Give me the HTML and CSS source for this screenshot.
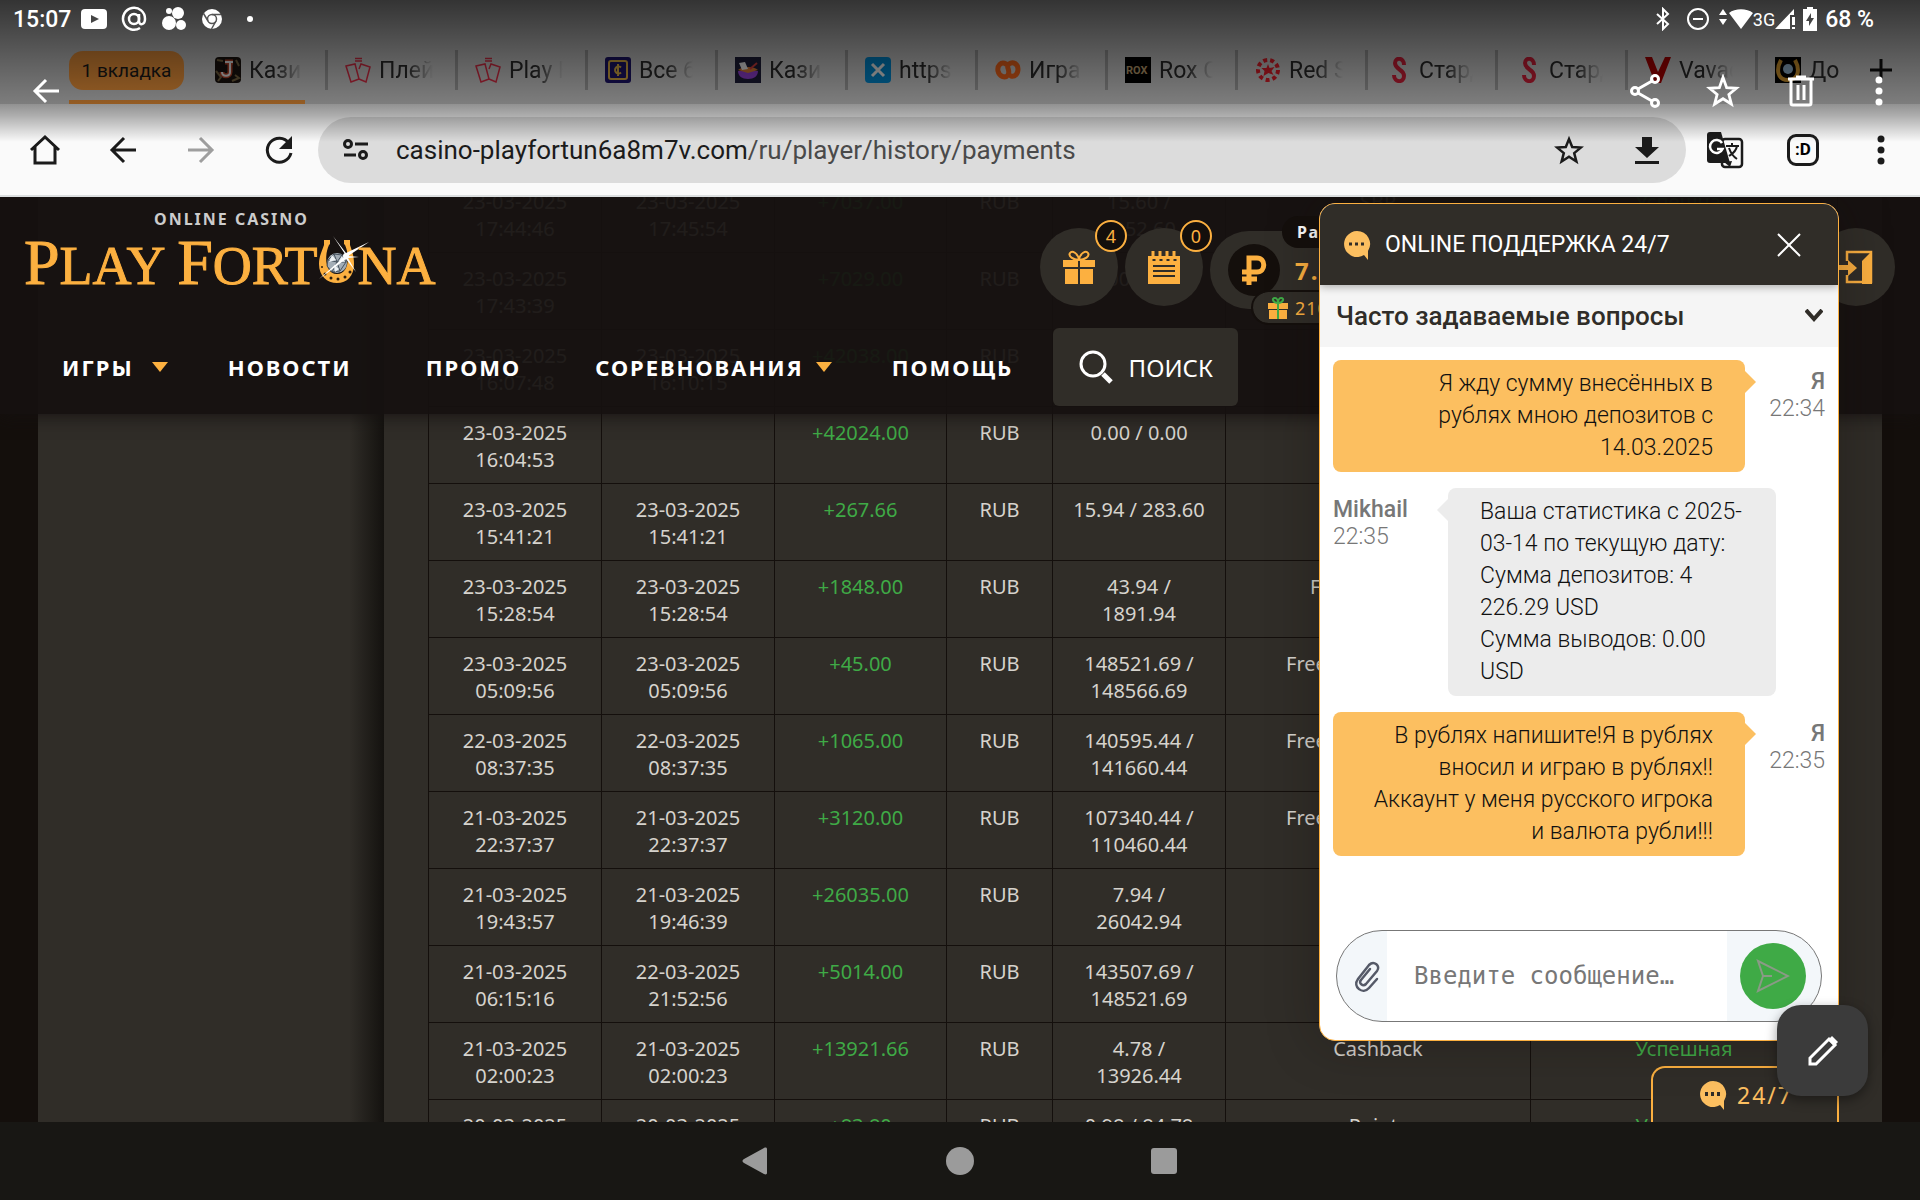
FILE: index.html
```html
<!DOCTYPE html>
<html lang="ru">
<head>
  <meta charset="UTF-8" />
  <meta name="viewport" content="width=device-width, initial-scale=1" />
  <title>Play Fortuna - История платежей</title>
  <link rel="stylesheet" href="styles.css">
</head>
<body>
  <div class="browser">
    <div class="tab-strip">
      <div class="tab-group">
        <button class="group-pill">1 вкладка</button>
        <div class="tab-inner">
          <svg class="fav" viewBox="0 0 26 26"><rect width="26" height="26" rx="4" fill="#1c1410"/><path d="M2 3l6 1M1 14l5 6-3 4M21 3l3 6M20 18l4 3-7 3" stroke="#7d6a45" stroke-width="2" fill="none"/><path d="M10 5h8M15 5v10c0 5-8 5-8 0" fill="none" stroke="#c2482c" stroke-width="5"/><path d="M10 5h8M15 5v10c0 5-8 5-8 0" fill="none" stroke="#fff" stroke-width="2"/></svg>
          <span class="tab-title">Казино</span>
        </div>
      </div>
      <div class="tab">
        <svg class="fav" viewBox="0 0 26 26" fill="none" stroke="#e8304a" stroke-width="1.500"><path d="M10 1.500h7M10 4h7M1 9l9-2 4 15-8 3zM14 12l2-5 9 3-4 15-7-3"/></svg>
        <span class="tab-title">Плей</span>
      </div>
      <div class="tab">
        <svg class="fav" viewBox="0 0 26 26" fill="none" stroke="#e8304a" stroke-width="1.500"><path d="M10 1.500h7M10 4h7M1 9l9-2 4 15-8 3zM14 12l2-5 9 3-4 15-7-3"/></svg>
        <span class="tab-title">Play F</span>
      </div>
      <div class="tab">
        <svg class="fav" viewBox="0 0 26 26"><rect width="26" height="26" rx="3" fill="#1d1470"/><rect x="4" y="4" width="18" height="18" rx="2" fill="none" stroke="#e9b949" stroke-width="2"/><path d="M16 10.500a3.500 3.500 0 1 0 0 5M13 7v12" stroke="#e9b949" stroke-width="2" fill="none"/></svg>
        <span class="tab-title">Все б</span>
      </div>
      <div class="tab">
        <svg class="fav" viewBox="0 0 26 26"><rect width="26" height="26" fill="#1f1f3c"/><path d="M3 14h20c0 5-4 8-10 8S3 19 3 14z" fill="#9b43e0"/><path d="M3 13c4-4 16-4 20 0l-10 3z" fill="#e98538"/><path d="M4 6l6-1 3 7-6 1z" fill="#fff"/><path d="M15 12l7-6" stroke="#e04040" stroke-width="2"/></svg>
        <span class="tab-title">Казин</span>
      </div>
      <div class="tab">
        <svg class="fav" viewBox="0 0 26 26"><rect width="26" height="26" rx="4" fill="#0091dc"/><path d="M7 7l12 12M19 7L7 19" stroke="#fff" stroke-width="3"/></svg>
        <span class="tab-title">https:</span>
      </div>
      <div class="tab">
        <svg class="fav" viewBox="0 0 26 26" fill="none" stroke="#ff6a1c" stroke-width="5" stroke-linecap="round"><path d="M11 7C6 4 2 9 3 14s7 8 10 4c3-5-3-8 1-11s9 0 9 5-3 8-7 7"/></svg>
        <span class="tab-title">Игра</span>
      </div>
      <div class="tab">
        <svg class="fav" viewBox="0 0 26 26"><rect width="26" height="26" fill="#000"/><text x="1" y="17" class="fav-rox">ROX</text></svg>
        <span class="tab-title">Rox C</span>
      </div>
      <div class="tab">
        <svg class="fav" viewBox="0 0 26 26"><circle cx="13" cy="13" r="10" fill="none" stroke="#f01f2c" stroke-width="4" stroke-dasharray="4 3"/><path d="M13 7l1.500 4 5-1-3 4 2 4-5-2-5 3 1-5-3-3 5 0z" fill="#f01f2c"/></svg>
        <span class="tab-title">Red S</span>
      </div>
      <div class="tab">
        <svg class="fav" viewBox="0 0 26 26" fill="none" stroke="#e0213c" stroke-width="4"><path d="M19 8c0-8-9-8-9-2 0 7 9 6 9 13 0 7-10 7-10-1"/></svg>
        <span class="tab-title">Старда</span>
      </div>
      <div class="tab">
        <svg class="fav" viewBox="0 0 26 26" fill="none" stroke="#e0213c" stroke-width="4"><path d="M19 8c0-8-9-8-9-2 0 7 9 6 9 13 0 7-10 7-10-1"/></svg>
        <span class="tab-title">Старда</span>
      </div>
      <div class="tab">
        <svg class="fav" viewBox="0 0 26 26"><path d="M0 0h7l6 15L20 0h6L16 26h-6z" fill="#b80000"/></svg>
        <span class="tab-title">Vavad</span>
      </div>
      <div class="tab last">
        <svg class="fav" viewBox="0 0 26 26"><rect width="26" height="26" fill="#000"/><path d="M6 3c-5 9-4 20 7 20S25 12 20 3" fill="none" stroke="#e0a030" stroke-width="4"/><circle cx="13" cy="12" r="5" fill="#9dc0dc"/></svg>
        <span class="tab-title">До</span>
      </div>
      <button class="new-tab" aria-label="Новая вкладка"><svg width="24" height="24" viewBox="0 0 24 24"><path d="M12 1v22M1 12h22" stroke="#111" stroke-width="3"/></svg></button>
    </div>

    <div class="toolbar">
      <button class="tool" aria-label="Домой"><svg width="34" height="34" viewBox="0 0 34 34" fill="none" stroke="#1b1b1b" stroke-width="3"><path d="M3 17L17 4l14 13M7 14v16h20V14"/></svg></button>
      <button class="tool" aria-label="Назад"><svg width="34" height="34" viewBox="0 0 34 34" fill="none" stroke="#1b1b1b" stroke-width="3"><path d="M30 17H6M18 5L6 17l12 12"/></svg></button>
      <button class="tool" aria-label="Вперёд"><svg width="34" height="34" viewBox="0 0 34 34" fill="none" stroke="#9e9e9e" stroke-width="3"><path d="M4 17h24M16 5l12 12-12 12"/></svg></button>
      <button class="tool" aria-label="Обновить"><svg width="34" height="34" viewBox="0 0 34 34"><path d="M27 10A12 12 0 1 0 29 20" fill="none" stroke="#1b1b1b" stroke-width="3"/><path d="M30 3v13H17z" fill="#1b1b1b"/></svg></button>
      <div class="address">
        <svg class="site-info" width="28" height="24" viewBox="0 0 28 24" fill="none" stroke="#1b1b1b" stroke-width="3"><circle cx="6" cy="6" r="3.500"/><path d="M13 6h13M2 17h12"/><circle cx="21" cy="17" r="3.500"/></svg>
        <a class="url" href="#"><span>casino-playfortun6a8m7v.com</span>/ru/player/history/payments</a>
        <button class="tool" aria-label="В закладки"><svg width="30" height="30" viewBox="0 0 30 30"><path d="M15 4l3.200 8 8.600.6-6.600 5.500 2.200 8.400L15 21.800l-7.400 4.700 2.200-8.400L3.200 12.600l8.600-.6z" fill="none" stroke="#1b1b1b" stroke-width="2.500"/></svg></button>
        <button class="tool" aria-label="Скачать"><svg width="30" height="34" viewBox="0 0 30 34" fill="#1b1b1b"><path d="M10 4h10v10h7L15 25 3 14h7zM3 28h24v3H3z"/></svg></button>
      </div>
      <button class="tool" aria-label="Перевести"><svg width="38" height="38" viewBox="0 0 38 38"><rect x="16" y="8" width="20" height="28" rx="3" fill="none" stroke="#1b1b1b" stroke-width="2.500"/><path d="M4 1h11l9 31H4a3 3 0 0 1-3-3V4a3 3 0 0 1 3-3z" fill="#1b1b1b"/><path d="M18 31l6 5 2-6z" fill="#1b1b1b"/><path d="M16 12a6.500 6.500 0 1 0 .5 6H11" fill="none" stroke="#fff" stroke-width="2.500"/><path d="M20 15h13M26 12v3M31 15c-1 6-5 8-8 10M23 17c2 6 5 9 8 11" fill="none" stroke="#1b1b1b" stroke-width="2"/></svg></button>
      <button class="tool" aria-label="Вкладки"><span class="tab-count">:D</span></button>
      <button class="tool" aria-label="Меню"><svg width="10" height="30" viewBox="0 0 10 30" fill="#1b1b1b"><circle cx="5" cy="4" r="3.500"/><circle cx="5" cy="15" r="3.500"/><circle cx="5" cy="26" r="3.500"/></svg></button>
    </div>

    <!-- gallery bar over the browser -->
    <div class="viewer">
      <div class="status">
        <span class="clock">15:07</span>
        <svg width="26" height="20" viewBox="0 0 26 20"><rect width="26" height="20" rx="4" fill="#fff"/><path d="M10 6l8 4-8 4z" fill="#444"/></svg>
        <svg width="26" height="26" viewBox="0 0 26 26" fill="none" stroke="#fff" stroke-width="2.500"><circle cx="13" cy="13" r="5"/><path d="M18 8v7c0 5 6 4 6-2a11 11 0 1 0-5 9"/></svg>
        <svg width="26" height="26" viewBox="0 0 26 26" fill="#fff"><circle cx="17" cy="7" r="6"/><circle cx="8" cy="17" r="7"/><circle cx="8" cy="5" r="3"/><circle cx="20" cy="19" r="5"/></svg>
        <svg width="22" height="22" viewBox="0 0 22 22" fill="none"><circle cx="11" cy="11" r="10" fill="#fff"/><circle cx="11" cy="11" r="4.500" stroke="#555" stroke-width="1.500"/><path d="M11 6.500h9M7 13L2.500 5.500M15 13l-4.500 8" stroke="#555" stroke-width="1.500"/></svg>
        <span class="dot"></span>
        <div class="status-right">
          <svg width="16" height="24" viewBox="0 0 16 24" fill="none" stroke="#fff" stroke-width="2"><path d="M2 7l11 10-5 5V2l5 5L2 17"/></svg>
          <svg class="dnd" width="22" height="22" viewBox="0 0 22 22" fill="none" stroke="#fff" stroke-width="2"><circle cx="11" cy="11" r="10"/><path d="M6 11h10"/></svg>
          <svg width="34" height="22" viewBox="0 0 34 22" fill="#fff"><path d="M4 1l4 6H0zM4 17l4-6H0zM22 21L10 5c6-5 18-5 24 0z"/></svg>
          <span class="net">3G</span>
          <svg width="22" height="22" viewBox="0 0 22 22" fill="#fff"><path d="M0 21L19 1v6h-4v14zM17 9h3v8h-3zM17 19h3v2h-3z"/></svg>
          <svg class="battery" width="14" height="24" viewBox="0 0 14 24"><path d="M4 0h6v2h4v22H0V2h4z" fill="#fff"/><path d="M8 6l-5 8h3v5l5-8H8z" fill="#444"/></svg>
          <span class="percent">68 %</span>
        </div>
      </div>
      <div class="viewer-actions">
        <button class="tool" aria-label="Назад"><svg width="28" height="28" viewBox="0 0 28 28" fill="none" stroke="#fff" stroke-width="3"><path d="M27 14H3M14 3L3 14l11 11"/></svg></button>
        <span class="spacer"></span>
        <button class="tool" aria-label="Поделиться"><svg width="32" height="34" viewBox="0 0 32 34" fill="none" stroke="#fff" stroke-width="3"><circle cx="6" cy="17" r="3.500"/><circle cx="26" cy="5" r="3.500"/><circle cx="26" cy="29" r="3.500"/><path d="M9 15l14-8M9 19l14 8"/></svg></button>
        <button class="tool" aria-label="Избранное"><svg width="34" height="34" viewBox="0 0 30 30"><path d="M15 3l3.200 9 8.600.6-6.600 5.500 2.200 8.400L15 21.800l-7.400 4.700 2.200-8.400L3.200 12.600l8.600-.6z" fill="none" stroke="#fff" stroke-width="2.500"/></svg></button>
        <button class="tool" aria-label="Удалить"><svg width="28" height="32" viewBox="0 0 28 32" fill="none" stroke="#fff" stroke-width="3"><path d="M1 4h26M9 2h10M4 5v23q0 2 2 2h16q2 0 2-2V5M11 10v15M17 10v15"/></svg></button>
        <button class="tool" aria-label="Ещё"><svg width="10" height="30" viewBox="0 0 10 30" fill="#fff"><circle cx="5" cy="4" r="3.500"/><circle cx="5" cy="15" r="3.500"/><circle cx="5" cy="26" r="3.500"/></svg></button>
      </div>
    </div>
  </div>

  <div class="page">
    <header class="site-header">
      <div class="header-top">
        <a class="logo" href="#">
          <span class="logo-sub">ONLINE CASINO</span>
          <span class="logo-name"><b>P</b>LAY <b>F</b>ORT<svg class="shoe" width="40" height="48" viewBox="0 0 40 48"><path d="M7 4h6v4l-1 1C7 20 8 38 20 38s13-18 8-29l-1-1V4h6v5c2 6 4 11 4 19 0 12-7 19-17 19S2 40 2 28c0-8 3-13 5-19z" fill="#fcb040"/><g fill="#2a1c0c"><circle cx="5" cy="31" r="1"/><circle cx="8" cy="38" r="1.500"/><circle cx="14" cy="42" r="1.500"/><circle cx="21" cy="43" r="1.500"/><circle cx="28" cy="41" r="1.500"/><circle cx="33" cy="36" r="1.500"/></g><circle cx="20" cy="27" r="10" fill="#a3adb6"/><path d="M11 24l6-6 8 1 4 7-6 9-8 1-5-6zM11 24l9 2h9M20 26l-5 10M17 18l3 8 5-7M20 26l3 9" fill="none" stroke="#46525e" stroke-width="1"/><path d="M15 19l4 5-7 2zM25 20l3 6-6-1zM17 29l5 4-4 3z" fill="#eef2f5"/><path d="M28 18L16 0l13 17L52 6 31 20l11 1-11 1 8 14-10-13L2 43l25-22z" fill="#fff"/><circle cx="29" cy="20" r="3" fill="#fff"/></svg>NA</span>
        </a>
        <div class="player">
          <a class="round" href="#" aria-label="Подарки">
            <svg width="32" height="34" viewBox="0 0 32 34"><path d="M16 10C10 10 5 6 7 3s8 0 9 7c1-7 7-10 9-7s-3 7-9 7z" fill="none" stroke="#fcb040" stroke-width="2"/><path d="M0 10h15v7H0zM17 10h15v7H17zM2 19h13v15H2zM17 19h13v15H17z" fill="#fcb040"/></svg>
            <span class="badge">4</span>
          </a>
          <a class="round" href="#" aria-label="Задания">
            <svg width="34" height="34" viewBox="0 0 34 34"><path d="M1 6h32v28H1z" fill="#fcb040"/><path d="M6 1v7M13 1v7M20 1v7M27 1v7" stroke="#fcb040" stroke-width="3"/><path d="M6 16h22M6 21h22M6 26h22" stroke="#302d28" stroke-width="2"/><path d="M7 9v2M14 9v2M21 9v2M28 9v2" stroke="#302d28" stroke-width="3"/></svg>
            <span class="badge">0</span>
          </a>
          <div class="wallet">
            <span class="coin"><svg width="26" height="32" viewBox="0 0 26 32" fill="none" stroke="#fcb040" stroke-width="5"><path d="M8 31V4h8c9 0 9 14 0 14H1M1 25h15"/></svg></span>
            <span class="balance">7.</span>
            <span class="level">Ра</span>
            <span class="bonus"><svg width="20" height="22" viewBox="0 0 20 22"><path d="M0 6h20v6H0zM1 13h18v9H1z" fill="#fcb040"/><path d="M1 12.500h18" stroke="#302d28"/><path d="M10 22V6C5 6 3 1 7 1c2 0 3 3 3 5 0-2 1-5 3-5 4 0 2 5-3 5" fill="none" stroke="#3faa46" stroke-width="2"/></svg>210</span>
          </div>
          <a class="round" href="#" aria-label="Выход">
            <svg width="36" height="34" viewBox="0 0 36 34"><path d="M9 11V2h24v30H9v-7" fill="none" stroke="#fcb040" stroke-width="2.500"/><path d="M34 1v33H24V11z" fill="#fcb040"/><path d="M0 15h10v-5l9 8-9 8v-6H0z" fill="#fcb040"/></svg>
          </a>
        </div>
      </div>
      <nav class="menu">
        <a href="#" class="drop">ИГРЫ</a>
        <a href="#">НОВОСТИ</a>
        <a href="#">ПРОМО</a>
        <a href="#" class="drop close">СОРЕВНОВАНИЯ</a>
        <a href="#">ПОМОЩЬ</a>
        <button class="search"><svg width="34" height="34" viewBox="0 0 34 34" fill="none" stroke="#fff"><circle cx="14" cy="14" r="12" stroke-width="3"/><path d="M24 24l8 8" stroke-width="5"/></svg>ПОИСК</button>
      </nav>
    </header>

    <div class="content">
      <aside class="side"></aside>
      <main class="history">
        <table>
          <colgroup><col class="c-date"><col class="c-date"><col class="c-sum"><col class="c-cur"><col class="c-date"><col class="c-type"><col></colgroup>
          <tbody>
            <tr><td>23-03-2025 17:44:46</td><td>23-03-2025 17:45:54</td><td class="plus">+7037.00</td><td>RUB</td><td>15.60 / 7052.60</td><td>SBP</td><td class="plus">Успешная</td></tr>
            <tr><td>23-03-2025 17:43:39</td><td></td><td class="plus">+7029.00</td><td>RUB</td><td>0.00 / 0.00</td><td></td><td></td></tr>
            <tr><td>23-03-2025 16:07:48</td><td>23-03-2025 16:10:15</td><td class="plus">+42038.00</td><td>RUB</td><td></td><td></td><td></td></tr>
            <tr><td>23-03-2025 16:04:53</td><td></td><td class="plus">+42024.00</td><td>RUB</td><td>0.00 / 0.00</td><td></td><td></td></tr>
            <tr><td>23-03-2025 15:41:21</td><td>23-03-2025 15:41:21</td><td class="plus">+267.66</td><td>RUB</td><td>15.94 / 283.60</td><td></td><td></td></tr>
            <tr><td>23-03-2025 15:28:54</td><td>23-03-2025 15:28:54</td><td class="plus">+1848.00</td><td>RUB</td><td>43.94 / 1891.94</td><td class="bonus-type short">Free</td><td></td></tr>
            <tr><td>23-03-2025 05:09:56</td><td>23-03-2025 05:09:56</td><td class="plus">+45.00</td><td>RUB</td><td>148521.69 / 148566.69</td><td class="bonus-type">Free</td><td></td></tr>
            <tr><td>22-03-2025 08:37:35</td><td>22-03-2025 08:37:35</td><td class="plus">+1065.00</td><td>RUB</td><td>140595.44 / 141660.44</td><td class="bonus-type">Free</td><td></td></tr>
            <tr><td>21-03-2025 22:37:37</td><td>21-03-2025 22:37:37</td><td class="plus">+3120.00</td><td>RUB</td><td>107340.44 / 110460.44</td><td class="bonus-type">Free</td><td></td></tr>
            <tr><td>21-03-2025 19:43:57</td><td>21-03-2025 19:46:39</td><td class="plus">+26035.00</td><td>RUB</td><td>7.94 /<br>26042.94</td><td></td><td></td></tr>
            <tr><td>21-03-2025 06:15:16</td><td>22-03-2025 21:52:56</td><td class="plus">+5014.00</td><td>RUB</td><td>143507.69 / 148521.69</td><td></td><td></td></tr>
            <tr><td>21-03-2025 02:00:23</td><td>21-03-2025 02:00:23</td><td class="plus">+13921.66</td><td>RUB</td><td>4.78 /<br>13926.44</td><td>Cashback</td><td class="plus">Успешная</td></tr>
            <tr><td>20-03-2025</td><td>20-03-2025</td><td class="plus">+83.80</td><td>RUB</td><td>0.98 / 84.78</td><td>Points</td><td class="plus">Успешная</td></tr>
          </tbody>
        </table>
      </main>
    </div>

    <button class="support-tab"><svg width="28" height="32" viewBox="0 0 28 32"><path d="M14 2a13 13 0 1 0 7 24l4 5v-9A13 13 0 0 0 14 2z" fill="#fcbf60"/><path d="M6 15h3M12 15h3M18 15h3" stroke="#302d28" stroke-width="4"/></svg>24/7</button>

    <section class="chat">
      <div class="chat-head">
        <svg width="28" height="32" viewBox="0 0 28 32"><path d="M14 2a13 13 0 1 0 7 24l4 5v-9A13 13 0 0 0 14 2z" fill="#fcbf60"/><path d="M6 15h3M12 15h3M18 15h3" stroke="#302d28" stroke-width="3"/></svg>
        <span>ONLINE ПОДДЕРЖКА 24/7</span>
        <button aria-label="Закрыть"><svg width="24" height="24" viewBox="0 0 24 24"><path d="M1 1l22 22M23 1L1 23" stroke="#fff" stroke-width="2"/></svg></button>
      </div>
      <button class="faq">Часто задаваемые вопросы<svg width="18" height="14" viewBox="0 0 18 14"><path d="M1 1l8 9 8-9" fill="none" stroke="#302d28" stroke-width="4"/></svg></button>
      <div class="messages">
        <div class="msg mine">
          <p class="bubble">Я жду сумму внесённых в рублях мною депозитов с 14.03.2025</p>
          <div class="who"><b>Я</b>22:34</div>
        </div>
        <div class="msg">
          <div class="who"><b>Mikhail</b>22:35</div>
          <p class="bubble">Ваша статистика с 2025-<wbr>03-14 по текущую дату:<br>Сумма депозитов: 4 226.29 USD<br>Сумма выводов: 0.00 USD</p>
        </div>
        <div class="msg mine">
          <p class="bubble">В рублях напишите!Я в рублях вносил и играю в рублях!! Аккаунт у меня русского игрока и валюта рубли!!!</p>
          <div class="who"><b>Я</b>22:35</div>
        </div>
      </div>
      <form class="compose">
        <button type="button" class="attach" aria-label="Прикрепить файл"><svg width="26" height="34" viewBox="0 0 26 34" fill="none" stroke="#555a68" stroke-width="2.500" stroke-linecap="round"><path d="M23 20l-8 9c-6 7-17-1-11-9L15 6c5-5 12 1 8 6L12 25c-3 3-8-1-5-4l9-11"/></svg></button>
        <input type="text" aria-label="Сообщение" placeholder="Введите сообщение…" />
        <div class="send-wrap"><button type="button" class="send" aria-label="Отправить"><svg width="34" height="34" viewBox="0 0 34 34" fill="none" stroke="#8a9a86" stroke-width="2"><path d="M2 2l30 15L2 32l5-15zM7 17h9"/></svg></button></div>
      </form>
    </section>
  </div>

  <button class="fab" aria-label="Изменить"><svg width="32" height="32" viewBox="0 0 32 32" fill="none" stroke="#fff" stroke-width="3"><path d="M3 29v-6L22 4l6 6L9 29z"/><path d="M21 5l4-4 6 6-4 4z" fill="#fff" stroke="none"/></svg></button>

  <div class="system-nav">
    <button aria-label="Назад"><svg width="28" height="30" viewBox="0 0 28 30"><path d="M3 13L23 2c2-1 3 0 3 1v24c0 1-1 2-3 1L3 17c-2-1-2-3 0-4z" fill="#9b9b9b"/></svg></button>
    <button aria-label="Домой"><svg width="28" height="28" viewBox="0 0 28 28"><circle cx="14" cy="14" r="14" fill="#9b9b9b"/></svg></button>
    <button aria-label="Обзор"><svg width="26" height="26" viewBox="0 0 26 26"><rect width="26" height="26" rx="3" fill="#9b9b9b"/></svg></button>
  </div>
</body>
</html>
```
FILE: styles.css
```css
* {
  box-sizing: border-box;
}
body {
  margin: 0;
  height: 100vh;
  display: flex;
  flex-direction: column;
  position: relative;
  overflow: hidden;
  background: #181714;
  font-family: "Noto Sans", sans-serif;
}
button {
  border: none;
  background: none;
  padding: 0;
  font: inherit;
  color: inherit;
  cursor: pointer;
}
a {
  color: inherit;
  text-decoration: none;
}
svg {
  flex: none;
  display: block;
}

/* browser */
.browser {
  position: relative;
  font-family: Roboto, sans-serif;
  border-bottom: 2px solid #dcdfe0;
}
.tab-strip {
  height: 104px;
  padding: 36px 20px 0 51px;
  display: flex;
  background: #d8d8d8;
}
.tab-group {
  width: 236px;
  margin: 0 20px 0 18px;
  display: flex;
  align-items: center;
  gap: 31px;
  box-shadow: inset 0 -4px #ff9f3f;
}
.group-pill {
  width: 115px;
  height: 39px;
  border-radius: 14px;
  background: #ff9f3f;
  font-size: 19px;
  color: #1b1b1b;
}
.tab-inner,
.tab {
  display: flex;
  align-items: center;
  gap: 8px;
}
.tab {
  flex: 0 0 130px;
  padding-left: 20px;
  background: linear-gradient(#aaa, #aaa) 0 50% / 3px 40px no-repeat;
}
.tab.last {
  flex-basis: 110px;
}
.fav {
  width: 26px;
  height: 26px;
}
.fav-rox {
  font: bold 11px Roboto, sans-serif;
  fill: #c8aa78;
}
.tab-title {
  width: 54px;
  overflow: hidden;
  white-space: nowrap;
  font-size: 23px;
  color: #2c2c2c;
  mask-image: linear-gradient(90deg, #000 50%, transparent);
}
.new-tab {
  width: 32px;
  display: flex;
  justify-content: center;
  align-items: center;
}
.toolbar {
  height: 91px;
  padding-left: 6px;
  display: flex;
  align-items: center;
  background: #fafafa;
}
.tool {
  width: 78px;
  height: 66px;
  flex: none;
  display: flex;
  justify-content: center;
  align-items: center;
}
.address {
  flex: 1;
  height: 66px;
  padding-left: 24px;
  display: flex;
  align-items: center;
  border-radius: 33px;
  background: #dcdcdc;
}
.url {
  flex: 1;
  margin-left: 26px;
  font-size: 26px;
  color: #4a4a4a;
}
.url span {
  color: #1b1b1b;
}
.tab-count {
  width: 28px;
  height: 28px;
  border-radius: 7px;
  outline: 3px solid #1b1b1b;
  outline-offset: -1px;
  font-size: 17px;
  font-weight: bold;
  line-height: 27px;
}

.viewer {
  position: absolute;
  inset: 0;
  color: #fff;
  background: linear-gradient(rgba(0,0,0,.76), rgba(0,0,0,.42) 104px, rgba(0,0,0,.3) 116px, transparent 142px);
}
.status {
  height: 38px;
  padding: 0 46px 0 13px;
  display: flex;
  align-items: center;
  gap: 14px;
}
.clock,
.percent {
  font-size: 23px;
  font-weight: 500;
}
.clock {
  margin-right: -4px;
}
.dot {
  width: 6px;
  height: 6px;
  margin-left: 10px;
  border-radius: 50%;
  background: #fff;
}
.status-right {
  margin-left: auto;
  display: flex;
  align-items: center;
}
.dnd {
  margin: 0 10px 0 16px;
}
.net {
  font-size: 18px;
}
.battery {
  margin: 0 8px 0 6px;
}
.viewer-actions {
  height: 106px;
  padding: 0 2px 0 7px;
  display: flex;
  align-items: center;
}
.spacer {
  flex: 1;
}

/* site */
.page {
  flex: 1;
  min-height: 0;
  position: relative;
  overflow: hidden;
  background: #140f0c;
}
.site-header {
  position: absolute;
  top: 0;
  left: 0;
  right: 0;
  height: 217px;
  background: rgba(21,17,16,.94);
  box-shadow: 0 2px 16px rgba(21,17,16,.9);
  z-index: 1;
}
.header-top {
  height: 131px;
  padding: 12px 25px 0 24px;
  display: flex;
  justify-content: space-between;
}
.logo-sub {
  display: block;
  padding-left: 130px;
  font-size: 16px;
  line-height: 20px;
  font-weight: bold;
  letter-spacing: 2px;
  color: #ccc;
}
.logo-name {
  display: flex;
  align-items: baseline;
  white-space: pre;
  font-family: "Liberation Serif", serif;
  font-size: 54px;
  line-height: 68px;
  color: #fcb040;
  -webkit-text-stroke: 1px #fcb040;
}
.logo-name b {
  font-size: 64px;
  font-weight: normal;
}
.shoe {
  overflow: visible;
}
.player {
  padding-top: 19px;
  display: flex;
  gap: 7px;
}
.round {
  position: relative;
  width: 78px;
  height: 78px;
  display: flex;
  justify-content: center;
  align-items: center;
  border-radius: 50%;
  background: #302d28;
}
.badge {
  position: absolute;
  top: -8px;
  right: -9px;
  width: 32px;
  height: 32px;
  border: 2px solid #fcb040;
  border-radius: 50%;
  background: #140f0c;
  font-size: 18px;
  line-height: 28px;
  text-align: center;
  color: #fcb040;
}
.wallet {
  position: relative;
  width: 600px;
  height: 78px;
  margin-top: 3px;
  padding-left: 18px;
  display: flex;
  align-items: center;
  gap: 15px;
  border-radius: 39px;
  background: linear-gradient(90deg, #302d28 110px, transparent 150px);
}
.coin {
  width: 52px;
  height: 52px;
  display: flex;
  justify-content: center;
  align-items: center;
  border-radius: 50%;
  background: #140f0c;
}
.balance {
  font-size: 24px;
  font-weight: bold;
  letter-spacing: 2px;
  color: #fcb040;
}
.level {
  position: absolute;
  top: -15px;
  left: 72px;
  padding: 0 15px;
  border-radius: 16px;
  background: #140f0c;
  font-size: 16px;
  line-height: 32px;
  font-weight: bold;
  letter-spacing: 2px;
  color: #fff;
}
.bonus {
  position: absolute;
  top: 61px;
  left: 43px;
  height: 31px;
  width: 100px;
  padding-left: 15px;
  display: flex;
  align-items: center;
  gap: 7px;
  border-radius: 16px;
  outline: 2px solid #140f0c;
  background: #302d28;
  font-size: 18px;
  letter-spacing: 1px;
  color: #fcb040;
}
.menu {
  height: 78px;
  padding-left: 62px;
  display: flex;
  align-items: center;
  font-size: 22px;
  font-weight: bold;
  letter-spacing: 2px;
  color: #fff;
}
.menu a {
  padding-right: 74px;
}
.menu a:nth-child(5) {
  padding-right: 40px;
}
.menu .drop {
  display: flex;
  align-items: center;
  padding-right: 60px;
  gap: 18px;
}
.menu .drop.close {
  gap: 12px;
}
.drop::after {
  content: "";
  border: 8px solid transparent;
  border-top: 10px solid #fcb040;
  border-bottom: 0;
}
.search {
  width: 185px;
  height: 78px;
  display: flex;
  justify-content: center;
  align-items: center;
  gap: 16px;
  border-radius: 6px;
  background: #302d28;
  font-size: 24px;
  font-weight: normal;
}
.content {
  height: 100%;
  padding: 0 38px;
  display: flex;
}
.side {
  width: 346px;
  background: linear-gradient(90deg, #302d28 90%, #14120f);
}
.history {
  flex: 1;
  padding: 0 44px;
  background: #302d28;
}
.history table {
  width: 100%;
  margin-top: -21px;
  table-layout: fixed;
  border-spacing: 0;
  border-right: 1px solid #140f0c;
  font-size: 20px;
  line-height: 27px;
  color: #d6d3cd;
}
.c-date {
  width: 173px;
}
.c-sum {
  width: 172px;
}
.c-cur {
  width: 106px;
}
.c-type {
  width: 305px;
}
.history td {
  height: 77px;
  padding: 12px 30px 10px;
  border: 1px solid #140f0c;
  border-width: 0 0 1px 1px;
  vertical-align: top;
  text-align: center;
}
.history td:nth-child(5) {
  padding-left: 16px;
  padding-right: 16px;
}
.history td.plus {
  color: #3faa46;
}
.history td.bonus-type {
  padding-left: 60px;
  text-align: left;
}
.history td.short {
  padding-left: 84px;
}

/* chat */
.support-tab {
  position: absolute;
  right: 81px;
  bottom: 0;
  width: 188px;
  height: 56px;
  display: flex;
  align-items: center;
  padding-left: 46px;
  gap: 10px;
  border: 2px solid #fcb040;
  border-bottom: 0;
  border-radius: 14px 14px 0 0;
  background: #302d28;
  font-size: 23px;
  letter-spacing: 2px;
  color: #fcbf60;
}
.chat {
  position: absolute;
  top: 6px;
  right: 81px;
  width: 520px;
  height: 838px;
  display: flex;
  flex-direction: column;
  overflow: hidden;
  border: 1px solid #fcb040;
  border-radius: 16px;
  background: #fff;
  box-shadow: 0 0 50px rgba(20,15,12,.35);
  font-family: Roboto, sans-serif;
  z-index: 2;
}
.chat-head {
  height: 81px;
  padding: 0 37px 0 23px;
  display: flex;
  align-items: center;
  gap: 14px;
  background: #302d28;
  box-shadow: 0 2px 8px rgba(0,0,0,.3);
  font-size: 23px;
  color: #fff;
  z-index: 1;
}
.chat-head button {
  margin-left: auto;
}
.faq {
  height: 62px;
  padding: 0 15px 0 16px;
  display: flex;
  justify-content: space-between;
  align-items: center;
  background: #f5f5f5;
  font-size: 26px;
  font-weight: 500;
  color: #302d28;
}
.messages {
  flex: 1;
  padding: 13px 13px 12px;
  display: flex;
  flex-direction: column;
  gap: 16px;
}
.msg {
  display: flex;
  justify-content: space-between;
}
.bubble {
  position: relative;
  width: 328px;
  margin: 0 49px 0 0;
  padding: 8px 32px;
  border-radius: 8px;
  background: #ececec;
  font-size: 23px;
  line-height: 32px;
  font-weight: 300;
  color: #111;
}
.bubble::before {
  content: "";
  position: absolute;
  top: 11px;
  right: 100%;
  border: 11px solid transparent;
  border-left: 0;
  border-right-color: #ececec;
}
.mine .bubble {
  width: 412px;
  margin: 0;
  background: #fcbf60;
  text-align: right;
}
.mine .bubble::before {
  left: 100%;
  right: auto;
  border: 11px solid transparent;
  border-left-color: #fcbf60;
  border-right: 0;
}
.who {
  padding-top: 8px;
  font-size: 23px;
  line-height: 27px;
  font-weight: 300;
  color: #777;
}
.who b {
  display: block;
  font-weight: 500;
}
.mine .who {
  text-align: right;
}
.compose {
  height: 92px;
  margin: 0 16px 18px;
  display: flex;
  overflow: hidden;
  border: 1px solid #777;
  border-radius: 46px;
  background: #f3f7fa;
}
.attach {
  width: 50px;
  padding-left: 17px;
}
.compose input {
  flex: 1;
  min-width: 0;
  padding: 0 27px;
  border: none;
  outline: none;
  background: #fff;
  font-family: "DejaVu Sans Mono", monospace;
  font-size: 24px;
}
.compose input::placeholder {
  color: #777;
}
.send-wrap {
  width: 94px;
  padding: 12px 13px;
}
.send {
  width: 66px;
  height: 66px;
  display: flex;
  justify-content: center;
  align-items: center;
  border-radius: 50%;
  background: #3faa46;
}

.fab {
  position: absolute;
  right: 52px;
  bottom: 104px;
  width: 91px;
  height: 91px;
  display: flex;
  justify-content: center;
  align-items: center;
  border-radius: 24px;
  background: #3b3b3b;
  box-shadow: 0 4px 12px rgba(0,0,0,.4);
  z-index: 3;
}
.system-nav {
  height: 78px;
  padding-right: 2px;
  display: flex;
  justify-content: center;
  align-items: center;
  gap: 177px;
}
```
